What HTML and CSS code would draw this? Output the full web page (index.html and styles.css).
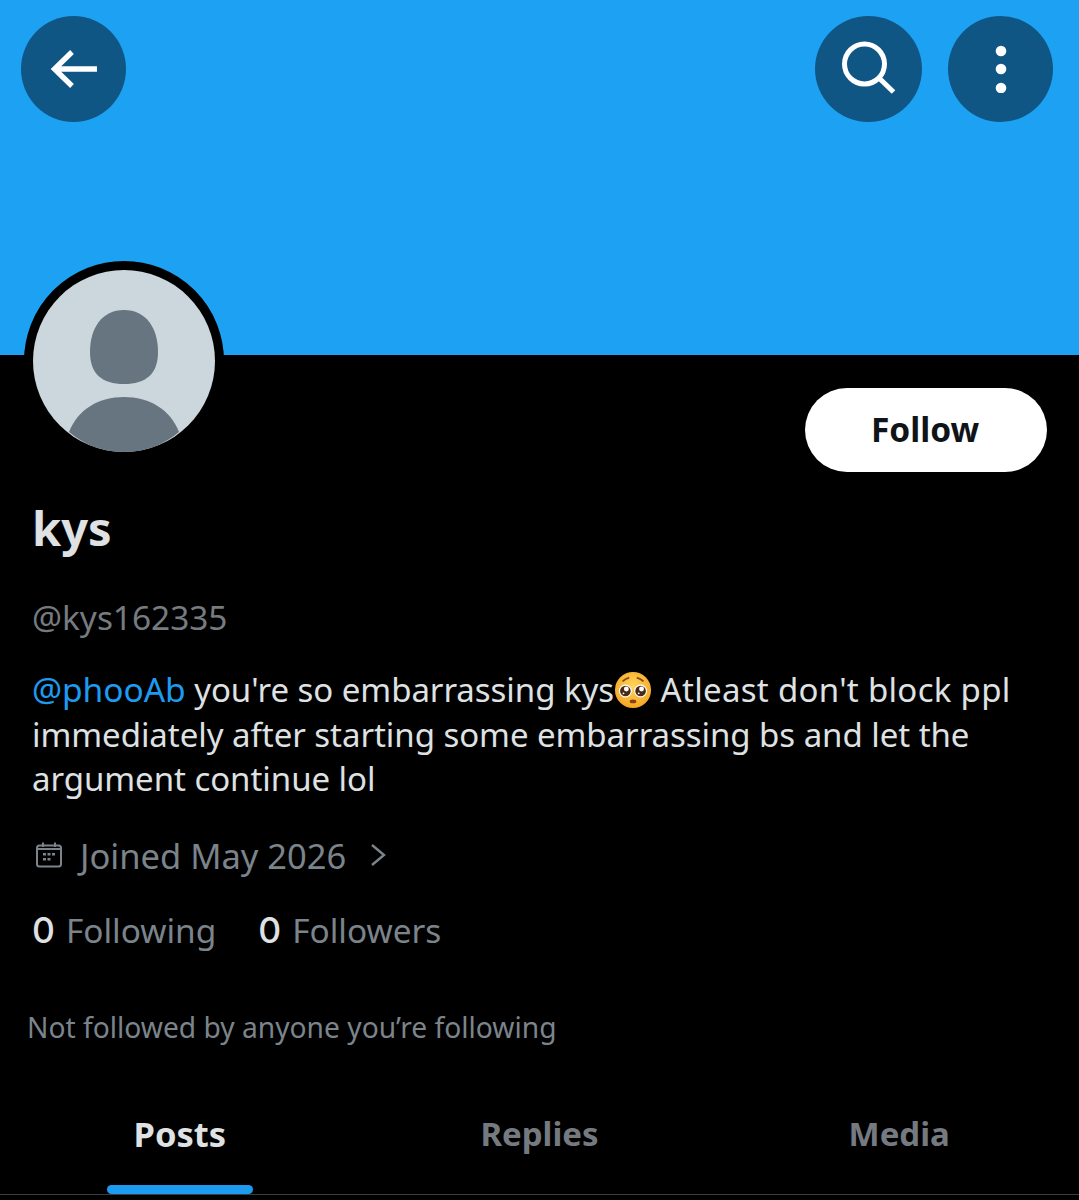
FILE: index.html
```html
<!DOCTYPE html>
<html lang="en">
<head>
    <meta charset="UTF-8">
    <meta name="viewport" content="width=device-width, initial-scale=1.0">
    <title>kys (@kys162335)</title>
    <link rel="stylesheet" href="styles.css">
</head>
<body>
    <header class="banner">
        <button class="round-btn" aria-label="Back">
            <svg width="50" height="50" viewBox="0 0 50 50" fill="none" stroke="#fff" stroke-width="5.300">
                <path d="M48 25H5M23 8L5.500 25L23 42"/>
            </svg>
        </button>
        <div class="banner-right">
            <button class="round-btn search" aria-label="Search">
                <svg width="56" height="56" viewBox="0 0 56 56" fill="none" stroke="#fff" stroke-width="5">
                    <circle cx="23.500" cy="23" r="20"/>
                    <path d="M38 37L52.500 51"/>
                </svg>
            </button>
            <button class="round-btn" aria-label="More">
                <svg width="14" height="48" viewBox="0 0 14 48" fill="#fff">
                    <circle cx="7" cy="6" r="5.300"/>
                    <circle cx="7" cy="24" r="5.300"/>
                    <circle cx="7" cy="43" r="5.300"/>
                </svg>
            </button>
        </div>
    </header>
    <main class="profile">
        <div class="top-row">
            <div class="avatar">
                <svg width="182" height="182" viewBox="0 0 182 182">
                    <circle cx="91" cy="91" r="91" fill="#ccd6dd"/>
                    <path d="M91 40C113 40 125 58 125 82C125 104 113 114 91 114C69 114 57 104 57 82C57 58 69 40 91 40Z" fill="#66757f"/>
                    <path d="M36 162C45 139 66 127 91 127C116 127 137 139 146 162C131 175 112 182 91 182C70 182 51 175 36 162Z" fill="#66757f"/>
                </svg>
            </div>
            <button class="follow-btn">Follow</button>
        </div>
        <h1 class="name">kys</h1>
        <p class="handle">@kys162335</p>
        <p class="bio"><a href="#">@phooAb</a> you're so embarrassing kys<svg class="emoji" width="38" height="38" viewBox="0 0 40 40">
                <defs>
                    <radialGradient id="face" cx="50%" cy="40%" r="60%">
                        <stop offset="0" stop-color="#ffd65c"/>
                        <stop offset="1" stop-color="#f5a623"/>
                    </radialGradient>
                </defs>
                <circle cx="20" cy="20" r="19" fill="url(#face)"/>
                <path d="M9 11C11 9 13 8 16 7M31 11C29 9 27 8 24 7" fill="none" stroke="#8a4b10" stroke-width="2"/>
                <circle cx="12" cy="21" r="6.800" fill="#fff"/>
                <circle cx="28" cy="21" r="6.800" fill="#fff"/>
                <circle cx="12" cy="21" r="5.600" fill="#4a2a14"/>
                <circle cx="28" cy="21" r="5.600" fill="#4a2a14"/>
                <circle cx="13" cy="19" r="2.600" fill="#fff"/>
                <circle cx="29" cy="19" r="2.600" fill="#fff"/>
                <circle cx="10" cy="23.500" r="1" fill="#fff"/>
                <circle cx="26" cy="23.500" r="1" fill="#fff"/>
                <ellipse cx="20" cy="32" rx="3.500" ry="2" fill="#8a3f16"/>
            </svg> <span class="bio-wide">Atleast don't block ppl</span> immediately after starting some embarrassing bs and let the argument continue lol</p>
        <div class="joined">
            <svg class="calendar" width="28" height="28" viewBox="0 0 28 28" fill="none" stroke="#7c848b" stroke-width="2">
                <rect x="2" y="4.500" width="24" height="21" rx="2.500"/>
                <path d="M8 1.500V6M20 1.500V6M2 8H26"/>
                <g fill="#7c848b" stroke="none">
                    <rect x="8" y="12" width="3" height="2.500"/>
                    <rect x="12.500" y="12" width="3" height="2.500"/>
                    <rect x="17" y="12" width="3" height="2.500"/>
                    <rect x="8" y="17" width="3" height="2.500"/>
                    <rect x="12.500" y="17" width="3" height="2.500"/>
                </g>
            </svg>
            <span>Joined May 2026</span>
            <svg class="chevron" width="16" height="24" viewBox="0 0 16 24" fill="none" stroke="#7c848b" stroke-width="2.400">
                <path d="M2 2L14 12L2 22"/>
            </svg>
        </div>
        <div class="stats">
            <span><b>0</b>Following</span>
            <span><b>0</b>Followers</span>
        </div>
        <p class="not-followed">Not followed by anyone you’re following</p>
    </main>
    <nav class="tabs">
        <a class="tab active" href="#"><span>Posts</span></a>
        <a class="tab" href="#"><span>Replies</span></a>
        <a class="tab" href="#"><span>Media</span></a>
    </nav>
</body>
</html>
```

FILE: styles.css
```css
body {
    margin: 0;
    background-color: #000;
    color: #dfe1e2;
    font-family: "Noto Sans", "Open Sans", sans-serif;
    height: 1200px;
    overflow: hidden;
}

.banner {
    height: 355px;
    background-color: #1da1f2;
    padding: 16px 26px 0 21px;
    box-sizing: border-box;
    display: flex;
    justify-content: space-between;
    align-items: flex-start;
}

.banner-right {
    display: flex;
    gap: 26px;
}

.round-btn {
    width: 105px;
    height: 106px;
    padding: 0;
    border: none;
    border-radius: 50%;
    background-color: #0f5685;
    display: flex;
    align-items: center;
    justify-content: center;
}

.round-btn.search {
    width: 107px;
}

.profile {
    padding: 0 32px;
}

.top-row {
    display: flex;
    justify-content: space-between;
    align-items: flex-start;
}

.avatar {
    width: 182px;
    height: 182px;
    margin: -94px 0 0 -8px;
    border: 9px solid #000;
    border-radius: 50%;
    background-color: #000;
}

.avatar svg {
    display: block;
}

.follow-btn {
    margin-top: 33px;
    width: 242px;
    height: 84px;
    border: none;
    border-radius: 42px;
    background-color: #fff;
    color: #0f1419;
    font: 700 33.500px "Noto Sans", sans-serif;
    padding: 0 2px 2px 0;
}

.name {
    margin: 26px 0 0;
    font-size: 47px;
    line-height: 60px;
    font-weight: 700;
}

.handle {
    margin: 37px 0 0;
    font-size: 33.400px;
    line-height: 44px;
    color: #767b80;
}

.bio {
    margin: 28px 0 0;
    font-size: 33px;
    line-height: 44.500px;
    letter-spacing: -0.05px;
}

.bio a {
    color: #1d9bf0;
    text-decoration: none;
    font-size: 33.500px;
}

.bio-wide {
    letter-spacing: 0.3px;
}

.emoji {
    vertical-align: -7px;
}

.joined {
    margin-top: 32px;
    display: flex;
    align-items: center;
    font-size: 34.500px;
    line-height: 44px;
    color: #7c848b;
}

.calendar {
    margin: -2px 0 0 3px;
}

.joined span {
    margin: 0 24px 0 17px;
}

.chevron {
    margin-top: -2px;
}

.stats {
    margin-top: 30px;
    height: 44px;
    display: flex;
    gap: 42px;
    font-size: 33.400px;
    line-height: 44px;
    color: #7c848b;
}

.stats b {
    color: #dfe1e2;
    font-family: Inter, "Noto Sans", sans-serif;
    font-weight: 500;
    font-size: 35.500px;
    margin-right: 11px;
}

.not-followed {
    margin: 55px 0 0 -5px;
    font-size: 28.200px;
    line-height: 40px;
    color: #7c848b;
}

.tabs {
    margin-top: 52px;
    height: 96px;
    display: flex;
    border-bottom: 1px solid #3a3d40;
    box-sizing: border-box;
}

.tab {
    flex: 1;
    text-align: center;
    text-decoration: none;
    color: #747a80;
    font-size: 33px;
    font-weight: 700;
    line-height: 44px;
    padding-top: 13px;
}

.tab span {
    display: inline-block;
}

.tab.active {
    color: #dfe1e2;
    font-size: 34.500px;
}

.tab.active span::after {
    content: "";
    display: block;
    margin: 29px -27px 0;
    height: 9px;
    border-radius: 5px;
    background-color: #1d9bf0;
}
```
